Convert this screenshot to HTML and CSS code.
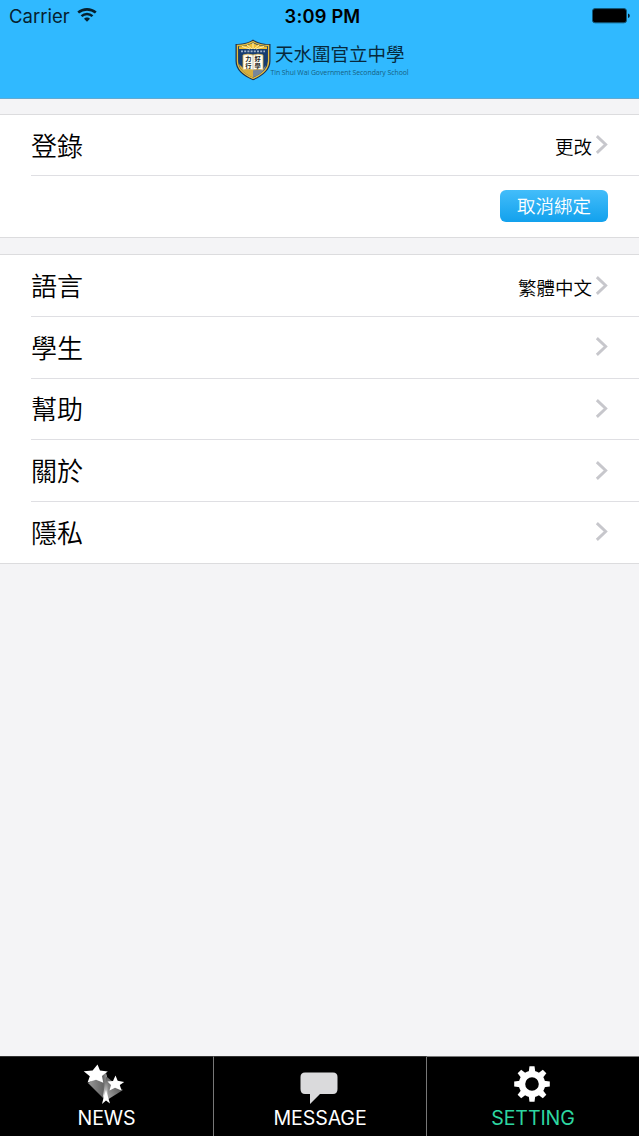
FILE: index.html
```
<!DOCTYPE html>
<html lang="zh-Hant">
<head>
    <meta charset="UTF-8">
    <meta name="viewport" content="width=device-width, initial-scale=1.0">
    <title>天水圍官立中學</title>
    <link rel="stylesheet" href="styles.css">
</head>
<body>
    <header class="header">
        <div class="status-bar">
            <div class="carrier">
                <span>Carrier</span>
                <svg class="wifi" width="20" height="14" viewBox="0 0 20 14">
                    <path d="M1.2 4.6 C6.2 0.3 13.8 0.3 18.8 4.6" fill="none" stroke="#06202e" stroke-width="2.6"/>
                    <path d="M4.5 8.2 C7.7 5.2 12.3 5.2 15.5 8.2" fill="none" stroke="#06202e" stroke-width="2.5"/>
                    <path d="M7 10.8 C8.6 9 11.4 9 13 10.8 L10 13.8 Z" fill="#06202e"/>
                </svg>
            </div>
            <span class="time">3:09 PM</span>
            <svg class="battery" width="38" height="16" viewBox="0 0 38 16">
                <rect x="0.5" y="0.6" width="34" height="14.2" rx="2.5" fill="#000" stroke="#135878"/>
                <path d="M36 5.4 Q37.8 5.8 37.8 7.7 Q37.8 9.6 36 10 Z" fill="#06202e"/>
            </svg>
        </div>
        <div class="brand">
            <svg class="crest" width="36" height="42" viewBox="0 0 36 42">
                <path d="M18 0.5 C13 4 7 5 0.5 5 V22 C0.5 31 8 37 18 41.3 C28 37 35.5 31 35.5 22 V5 C29 5 23 4 18 0.5 Z" fill="#1b3150"/>
                <path d="M18 2.6 C13 5.4 8 6.4 2.4 6.5 V22 C2.4 30 9 35.5 18 39.4 C27 35.5 33.6 30 33.6 22 V6.5 C28 6.4 23 5.4 18 2.6 Z" fill="#173d70" stroke="#e5bd3b" stroke-width="1.3"/>
                <path d="M4 10 V7.5 C10 7.2 14 6 18 4 C22 6 26 7.2 32 7.5 V10 Z" fill="#edbd35"/>
                <path d="M18 10 V4 M17 10 L12 6 M19 10 L24 6 M15 10 L7 7.5 M21 10 L29 7.5" stroke="#fff0b1"/>
                <path d="M18 30 V38.5 C10 35 5 31 4 25 L8 29 Z" fill="#d8ae3d"/>
                <path d="M18 30 H28 L31 26 C30 32 25 35.5 18 38.5 Z" fill="#77869b"/>
                <path d="M6 12.4 H30" stroke="#9db1ca" stroke-width="1.6" stroke-dasharray="2 1.2"/>
                <path d="M8 16 Q13 14.2 18 16 Q23 14.2 28 16 V31 Q23 29.5 18 31 Q13 29.5 8 31 Z" fill="#fffdf0" stroke="#d0ad50" stroke-width=".8"/>
                <path d="M18 16 V31" stroke="#9b9c91" stroke-width=".6"/>
                <text x="10.2" y="22" class="crest-text">力</text>
                <text x="19.6" y="22" class="crest-text">好</text>
                <text x="10.2" y="28.8" class="crest-text">行</text>
                <text x="19.6" y="28.8" class="crest-text">學</text>
            </svg>
            <div class="brand-names">
                <div class="brand-zh">天水圍官立中學</div>
                <div class="brand-en">Tin Shui Wai Government Secondary School</div>
            </div>
        </div>
    </header>

    <main class="content">
        <section class="group">
            <div class="row">
                <span class="label">登錄</span>
                <span class="value">更改</span>
                <svg class="chevron" viewBox="0 0 14 22"><path d="M2 2 L11.5 11 L2 20"/></svg>
            </div>
            <div class="row">
                <button class="unbind">取消綁定</button>
            </div>
        </section>

        <section class="group">
            <div class="row">
                <span class="label">語言</span>
                <span class="value">繁體中文</span>
                <svg class="chevron" viewBox="0 0 14 22"><path d="M2 2 L11.5 11 L2 20"/></svg>
            </div>
            <div class="row">
                <span class="label">學生</span>
                <svg class="chevron" viewBox="0 0 14 22"><path d="M2 2 L11.5 11 L2 20"/></svg>
            </div>
            <div class="row">
                <span class="label">幫助</span>
                <svg class="chevron" viewBox="0 0 14 22"><path d="M2 2 L11.5 11 L2 20"/></svg>
            </div>
            <div class="row">
                <span class="label">關於</span>
                <svg class="chevron" viewBox="0 0 14 22"><path d="M2 2 L11.5 11 L2 20"/></svg>
            </div>
            <div class="row">
                <span class="label">隱私</span>
                <svg class="chevron" viewBox="0 0 14 22"><path d="M2 2 L11.5 11 L2 20"/></svg>
            </div>
        </section>
    </main>

    <nav class="tab-bar">
        <div class="tab">
            <svg class="tab-icon news-icon" width="42" height="42" viewBox="0 0 42 42">
                <defs>
                    <linearGradient id="trail-left" x1="0" y1="0" x2="1" y2="0">
                        <stop offset="0" stop-color="#999"/>
                        <stop offset=".8" stop-color="#666"/>
                        <stop offset="1" stop-color="#999"/>
                    </linearGradient>
                    <linearGradient id="trail-mid" x1="0" y1="0" x2="0" y2="1">
                        <stop offset="0" stop-color="#555"/>
                        <stop offset="1" stop-color="#fff"/>
                    </linearGradient>
                    <linearGradient id="trail-right" x1="1" y1="0" x2="0" y2="1">
                        <stop offset="0" stop-color="#333"/>
                        <stop offset="1" stop-color="#aaa"/>
                    </linearGradient>
                </defs>
                <path d="M5 19 L23 9 L24 12 L22 36 Z" fill="url(#trail-left)"/>
                <path d="M24 13 L40 26 L24 36 Z" fill="url(#trail-right)"/>
                <path d="M23 13 L24.5 14 V33 L22 36 L20 32 Z" fill="url(#trail-mid)"/>
                <path d="M23 26 L25 33 L27 39.5 L23 36.5 L19 40 L20.5 34 Z" fill="#fff"/>
                <path d="M14.5 0.5 L17 6.5 L24.8 7.4 L18.9 12 L20.3 18.7 L13 15.7 L4.6 18.5 L6.8 12.2 L.7 7.3 L9.6 6.5 Z" fill="#fff"/>
                <path d="M32.5 11.5 L34.7 16.7 L41.2 18 L36.8 21 L38.5 26.5 L32 23.8 L26.5 26.5 L28 21 L24.5 17.5 L30 17 Z" fill="#fff"/>
            </svg>
            <span>NEWS</span>
        </div>
        <div class="tab">
            <svg class="tab-icon message-icon" width="38" height="42" viewBox="0 0 38 42">
                <path d="M5 8.5 H33 Q37.5 8.5 37.5 13 V25 Q37.5 30 33 30 H20 L10 40 V30 H5 Q.5 30 .5 25 V13 Q.5 8.5 5 8.5 Z" fill="#dadadc"/>
            </svg>
            <span>MESSAGE</span>
        </div>
        <div class="tab active">
            <svg class="tab-icon gear-icon" width="36" height="42" viewBox="-18 -20 36 42">
                <g fill="#fff">
                    <path id="tooth" d="M-3.5 -10 L-2.5 -17.8 H2.5 L3.5 -10 Z"/>
                    <use href="#tooth" transform="rotate(45)"/>
                    <use href="#tooth" transform="rotate(90)"/>
                    <use href="#tooth" transform="rotate(135)"/>
                    <use href="#tooth" transform="rotate(180)"/>
                    <use href="#tooth" transform="rotate(225)"/>
                    <use href="#tooth" transform="rotate(270)"/>
                    <use href="#tooth" transform="rotate(315)"/>
                </g>
                <circle r="10" fill="none" stroke="#fff" stroke-width="6.4"/>
            </svg>
            <span>SETTING</span>
        </div>
    </nav>
</body>
</html>
```

FILE: styles.css
```
* { box-sizing: border-box; }
body { font-family: Inter, "Noto Sans CJK TC", sans-serif; margin: 0; height: 100vh; display: flex; flex-direction: column; background: #f4f4f6; color: #000; overflow: hidden; }
svg { display: block; flex: none; }

.header { height: 99px; flex: none; background: #30b9ff; border-bottom: 1px solid #62aad2; }
.status-bar { display: grid; grid-template-columns: 1fr auto 1fr; align-items: center; height: 32px; padding: 0 9px 0 9px; font-size: 18.5px; line-height: 24px; }
.carrier { display: flex; align-items: center; gap: 7px; color: #06202e; }
.wifi { margin-bottom: 2px; }
.time { font-weight: 600; font-size: 18.3px; padding-left: 6px; letter-spacing: 0.2px; }
.battery { justify-self: end; }
.brand { display: flex; width: 176px; height: 42px; margin: 7px 0 0 234.5px; }
.brand-names { white-space: nowrap; color: #07293d; }
.brand-zh { font-family: "Noto Sans CJK TC", sans-serif; font-size: 18.5px; line-height: 25px; margin: 2px 0 0 4.5px; }
.brand-en { font-family: "Open Sans", sans-serif; font-size: 6.9px; line-height: 10px; letter-spacing: -0.05px; margin-top: 2px; color: #17617f; }
.crest-text { font-family: "Noto Sans CJK TC", sans-serif; font-size: 6.2px; font-weight: 700; fill: #222; }

.content { flex: 1; padding-top: 15px; }
.group { height: 124px; background: #fff; border-top: 1px solid #dcdcde; border-bottom: 1px solid #dcdcde; margin-bottom: 16.4px; display: flex; flex-direction: column; padding-left: 31px; }
.group + .group { height: 309.2px; }
.row { flex: 1; display: flex; align-items: center; justify-content: flex-end; padding: 0 31px 1px 0; }
.row + .row { border-top: 1px solid #dfdfe3; }
.group:first-child .row:first-child { flex: none; height: 60px; }
.label { font-family: "Noto Sans CJK TC", sans-serif; font-size: 26px; font-weight: 350; line-height: 38px; margin-right: auto; }
.value { font-family: "Noto Sans CJK TC", sans-serif; font-size: 18.5px; font-weight: 350; line-height: 28px; margin: 3px 3px 0 0; }
.chevron { width: 13px; height: 21px; }
.chevron path { fill: none; stroke: #c7c7cc; stroke-width: 3.1; }
.unbind { width: 108px; height: 32px; padding: 0 0 1px; border: 0; border-radius: 6px; background: linear-gradient(#43bdfa, #12a1ed); color: #fff; font: 350 18.5px/31px "Noto Sans CJK TC", sans-serif; }

.tab-bar { display: grid; grid-template-columns: 214px 213px 1fr; height: 80px; flex: none; background: #000; color: #fff; }
.tab { display: flex; flex-direction: column; align-items: center; padding-top: 7px; border-top: 1px solid #333; border-right: 1px solid #777; font-size: 19.6px; line-height: 25px; letter-spacing: -0.1px; }
.tab:last-child { border-right: 0; }
.tab-icon { position: relative; }
.news-icon { left: -2.5px; }
.message-icon { left: -1px; }
.gear-icon { left: -1.5px; }
.active { border-top-color: #777; color: #2dd6a0; }
```
